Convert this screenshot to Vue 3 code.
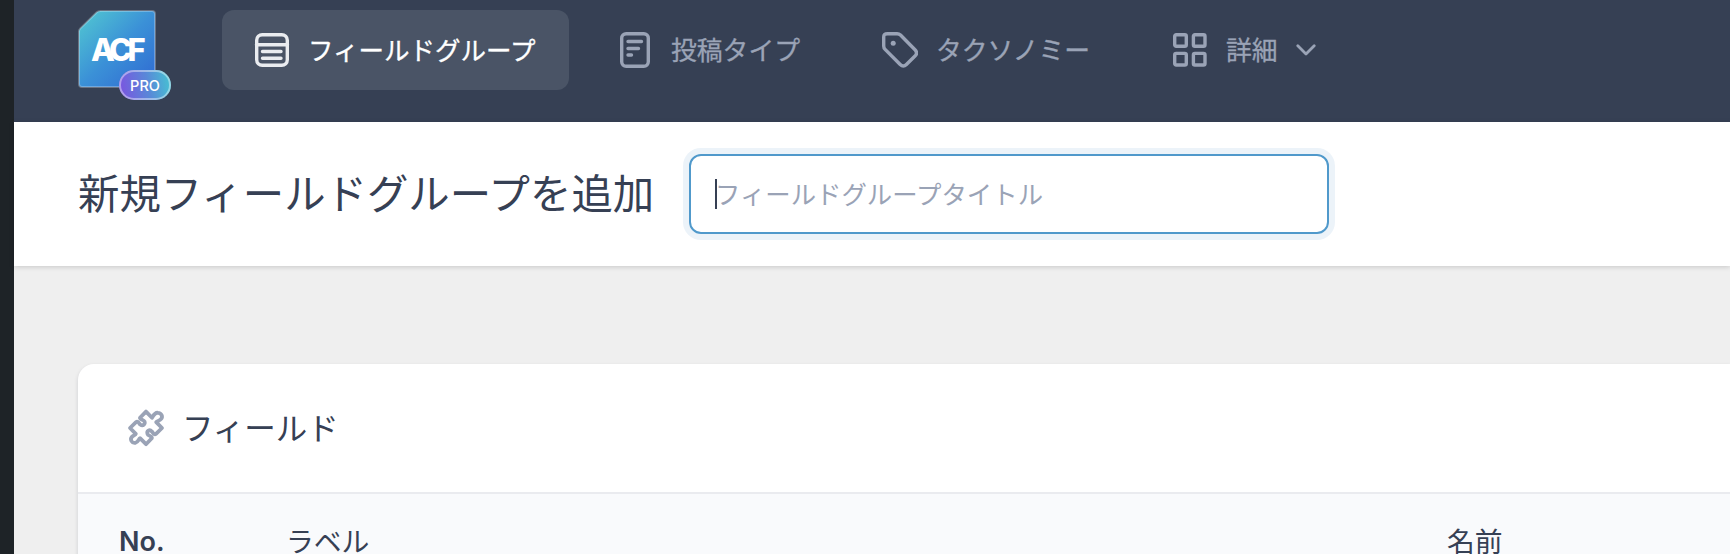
<script setup>
const navItems = [
  { key: 'groups', label: 'フィールドグループ', icon: 'list', active: true },
  { key: 'types', label: '投稿タイプ', icon: 'post' },
  { key: 'tax', label: 'タクソノミー', icon: 'tag' },
  { key: 'more', label: '詳細', icon: 'grid', menu: true },
]
</script>

<template>
  <div class="screen">
    <aside class="rail"></aside>
    <div class="content">
      <header class="topbar">
        <div class="logo">
          <svg class="logo-tile" width="78" height="78" viewBox="0 0 78 78">
            <defs>
              <linearGradient id="tile" x1="0" y1="0" x2="1" y2="1">
                <stop offset="0.05" stop-color="#50c4d2" />
                <stop offset="0.5" stop-color="#3b91d7" />
                <stop offset="1" stop-color="#2f68d2" />
              </linearGradient>
            </defs>
            <path
              d="M22.5 1H74a3 3 0 0 1 3 3v70a3 3 0 0 1-3 3H4a3 3 0 0 1-3-3V21.500q0-1.800 1.300-3.100L18.500 2.500Q20 1 22.500 1Z"
              fill="url(#tile)"
              stroke="#fff"
              stroke-opacity="0.27"
              stroke-width="2"
            />
          </svg>
          <span class="logo-word">ACF</span>
          <span class="pro">PRO</span>
        </div>
        <nav class="nav">
          <a v-for="item in navItems" :key="item.key" :class="['nav-item', item.key, { active: item.active }]">
            <svg v-if="item.icon === 'list'" class="icon" viewBox="0 0 36 36">
              <rect x="2.700" y="2.700" width="30.600" height="30.600" rx="5.500" />
              <path d="M2.500 12.700h31M8.500 19.500h18.500M8.500 26.300h18.500" />
            </svg>
            <svg v-else-if="item.icon === 'post'" class="icon" viewBox="0 0 36 36">
              <rect x="4.700" y="1.700" width="26.600" height="32.600" rx="4.500" />
              <path d="M11 9.500h13.500M11 16.500h10.500M11 23h3.500" />
            </svg>
            <svg v-else-if="item.icon === 'tag'" class="icon" viewBox="0 0 36 36">
              <path d="M1.700 5v9q0 2 1.400 3.400L18.200 32.500q3.100 3.100 6.200 0L33 24q3.100-3.100 0-6.200L18.500 3Q17.100 1.700 15.100 1.700H5.500Q1.700 1.700 1.700 5Z" />
              <circle class="dot" cx="11.200" cy="11.200" r="2.500" />
            </svg>
            <svg v-else class="icon" viewBox="0 0 36 36">
              <rect x="2.700" y="2.700" width="11.600" height="11.600" rx="1.500" />
              <rect x="21.400" y="2.700" width="11.600" height="11.600" rx="1.500" />
              <rect x="2.700" y="21.400" width="11.600" height="11.600" rx="1.500" />
              <rect x="21.400" y="21.400" width="11.600" height="11.600" rx="1.500" />
            </svg>
            <span class="label">{{ item.label }}</span>
            <svg v-if="item.menu" class="chevron" width="20" height="12" viewBox="0 0 20 12">
              <path d="M1.800 1.800 10 10l8.200-8.200" />
            </svg>
          </a>
        </nav>
      </header>

      <section class="titlebar">
        <h1>新規フィールドグループを追加</h1>
        <div class="field">
          <span class="caret"></span>
          <span class="placeholder">フィールドグループタイトル</span>
        </div>
      </section>

      <main class="card">
        <div class="card-head">
          <svg class="puzzle" width="40" height="40" viewBox="0 0 40 40">
            <path d="M14 9.800 20.000 3.600 26 9.800C27.500 7.200 29 4.200 32 4.800C35.400 5 37.200 8.500 35 11C34 12.500 31.500 13 30.200 14.200L36 20 30 25.800C28 27.500 27 24.500 25.800 23.500C23.500 20.800 20.500 23 21.500 26C22 28 26.500 28 25.800 30.200L20 36.200 14 30.200C12.500 31.500 12 34 9.500 34.800C5.800 35.500 3.800 31.500 5.800 29C7 27.500 9.500 27 9.800 25.800L4 20 10 14.200C12 12.500 13 15.500 14.200 16.500C17 18.500 19.500 16.200 18.500 13.500C18 11.800 13.500 11.500 14 9.800Z" />
          </svg>
          <h2>フィールド</h2>
        </div>
        <div class="columns">
          <span class="no">No.</span>
          <span class="col-label">ラベル</span>
          <span class="col-name">名前</span>
        </div>
      </main>
    </div>
  </div>
</template>

<style>
body {
  margin: 0;
  overflow: hidden;
}
</style>

<style scoped>
.screen {
  display: flex;
  width: 1730px;
  height: 554px;
  overflow: hidden;
  background: #efefef;
  color: #364054;
  font-family: Inter, "Noto Sans CJK JP", sans-serif;
}
.rail {
  flex: none;
  width: 14px;
  background: #1e2327;
}
.content {
  flex: 1;
  min-width: 0;
}
.topbar {
  display: flex;
  box-sizing: border-box;
  height: 122px;
  padding: 10px 0 0 64px;
  background: #364054;
}
.logo {
  position: relative;
  flex: none;
  width: 144px;
  height: 92px;
}
.logo-tile {
  display: block;
}
.logo-word {
  position: absolute;
  left: 13px;
  top: 22px;
  color: #fff;
  font: 800 31px/36px Inter, sans-serif;
  letter-spacing: -4.500px;
}
.pro {
  position: absolute;
  left: 41px;
  top: 60px;
  box-sizing: border-box;
  width: 52px;
  height: 30px;
  border-radius: 15px;
  background: linear-gradient(80deg, #7858df 8%, #5988d8 55%, #49b9d3 90%);
  color: #fff;
  font: 500 14.500px/31px Inter, sans-serif;
  text-align: center;
  box-shadow: inset 0 0 0 2px rgba(255, 255, 255, 0.42);
}
.nav {
  display: flex;
}
.nav-item {
  display: flex;
  align-items: center;
  box-sizing: border-box;
  height: 80px;
  padding-left: 32px;
  border-radius: 12px;
  color: #9aa3b6;
  font-size: 25.800px;
  white-space: nowrap;
}
.groups { width: 347px; }
.types { width: 265px; margin-left: 16px; }
.tax { width: 290px; }
.more { width: 210px; }
.nav-item.active {
  background: #4a5466;
  color: #fff;
  font-size: 25.500px;
}
.label {
  padding-bottom: 4px;
  -webkit-text-stroke: 0.3px currentColor;
}
.icon {
  flex: none;
  width: 36px;
  height: 36px;
  margin-right: 18px;
  fill: none;
  stroke: currentColor;
  stroke-width: 3.400;
  stroke-linecap: round;
  stroke-linejoin: round;
}
.active .icon {
  stroke: #eaecf0;
}
.icon .dot {
  fill: currentColor;
  stroke: none;
}
.chevron {
  margin-left: 18px;
  fill: none;
  stroke: currentColor;
  stroke-width: 2.800;
  stroke-linecap: round;
  stroke-linejoin: round;
}
.titlebar {
  position: relative;
  display: flex;
  align-items: center;
  box-sizing: border-box;
  height: 144px;
  padding-left: 64px;
  background: #fff;
  box-shadow: 0 1px 5px rgba(0, 0, 0, 0.17);
}
h1 {
  width: 611px;
  margin: 0;
  font-size: 41.400px;
  font-weight: 400;
  line-height: 60px;
  white-space: nowrap;
}
.field {
  display: flex;
  align-items: center;
  box-sizing: border-box;
  width: 640px;
  height: 80px;
  padding-left: 24px;
  border: 2px solid #5099cb;
  border-radius: 12px;
  box-shadow: 0 0 0 6px #ecf3f9;
}
.caret {
  width: 2px;
  height: 30px;
  background: #364054;
}
.placeholder {
  margin-left: -2px;
  padding-bottom: 3px;
  color: #9aa3b6;
  font-size: 25.400px;
  white-space: nowrap;
}
.card {
  height: 300px;
  margin: 98px 0 0 64px;
  border-radius: 16px 0 0 0;
  background: #fff;
  box-shadow: 0 2px 4px rgba(16, 24, 40, 0.14);
}
.card-head {
  display: flex;
  align-items: center;
  box-sizing: border-box;
  height: 130px;
  padding-left: 48px;
  border-bottom: 2px solid #eaebef;
}
.puzzle {
  flex: none;
  margin-right: 16px;
  fill: none;
  stroke: #9aa3b6;
  stroke-width: 3.800;
  stroke-linejoin: round;
}
h2 {
  margin: 0;
  padding-bottom: 4px;
  font-size: 31.500px;
  font-weight: 400;
  white-space: nowrap;
}
.columns {
  display: grid;
  grid-template-columns: 167px 1161px 1fr;
  height: 170px;
  padding-left: 41px;
  background: #f9fafc;
  font-size: 27.800px;
  line-height: 36px;
}
.columns span {
  padding-top: 30px;
}
.columns .no {
  font-size: 27px;
  font-weight: 600;
}
</style>
